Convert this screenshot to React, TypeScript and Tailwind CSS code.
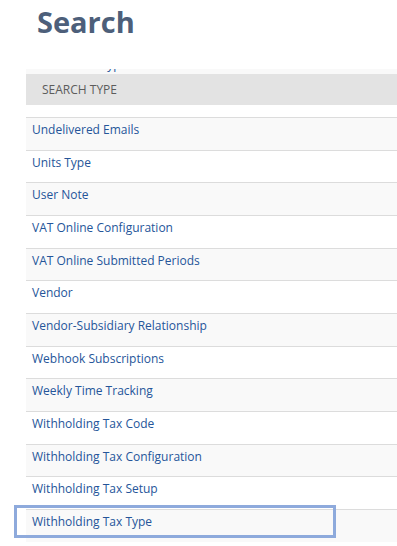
import React from "react";

const items = [
  "Undelivered Emails",
  "Units Type",
  "User Note",
  "VAT Online Configuration",
  "VAT Online Submitted Periods",
  "Vendor",
  "Vendor-Subsidiary Relationship",
  "Webhook Subscriptions",
  "Weekly Time Tracking",
  "Withholding Tax Code",
  "Withholding Tax Configuration",
  "Withholding Tax Setup",
  "Withholding Tax Type",
];

export default function App() {
  return (
    <div
      className="w-[397px] h-[546px] overflow-hidden bg-white"
      style={{ fontFamily: '"Open Sans", "Liberation Sans", sans-serif' }}
    >
      <div className="h-[69px] pl-[37px] pt-[2px]">
        <h1 className="text-[29px] leading-[40px] font-bold text-[#4d5f7a]">Search</h1>
      </div>
      <div className="ml-[26px]">
        <div className="h-[5px] overflow-hidden bg-[#f9f9f9] relative">
          <div className="absolute left-[6px] top-[-13px] text-[12px] leading-[18px] text-[#255599] whitespace-nowrap">
            Transaction Type
          </div>
        </div>
        <div className="h-[31px] bg-[#e3e3e3] flex items-center pl-[16px] text-[12px] text-[#5c5c5c] uppercase">
          Search Type
        </div>
        <div className="h-[12px]" />
        {items.map((it, i) => (
          <div
            key={it}
            className={`relative h-[32.67px] border-t border-[#dcdcdc] pl-[6px] pt-[3px] text-[12px] leading-[18px] text-[#255599] ${
              i % 2 === 0 ? "bg-[#f9f9f9]" : "bg-white"
            }`}
          >
            {it}
            {i === items.length - 1 && (
              <div className="absolute left-[-12px] top-[-5px] w-[322px] h-[33px] border-[3px] border-[#8eaadc]" />
            )}
          </div>
        ))}
      </div>
    </div>
  );
}
